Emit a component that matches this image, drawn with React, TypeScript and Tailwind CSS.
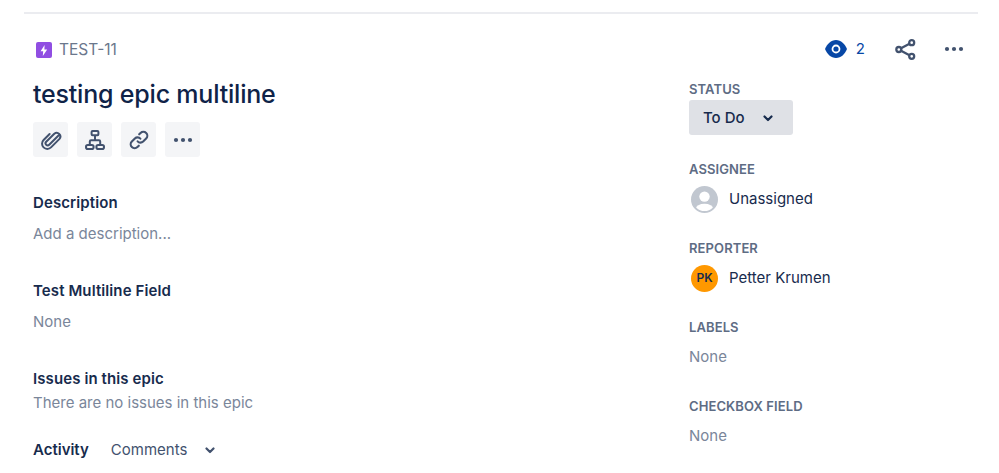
const font = { fontFamily: "Inter, sans-serif" };

function Dots() {
  return (
    <svg width="20" height="6" viewBox="0 0 20 6" fill="#42526e">
      <circle cx="3" cy="3" r="2.1" />
      <circle cx="10" cy="3" r="2.1" />
      <circle cx="17" cy="3" r="2.1" />
    </svg>
  );
}

function Chevron({ color = "#172b4d" }: { color?: string }) {
  return (
    <svg width="10" height="7" viewBox="0 0 10 7" fill="none" stroke={color} strokeWidth="2.2" strokeLinecap="round" strokeLinejoin="round">
      <path d="M1.5 1.5 5 5l3.5-3.5" />
    </svg>
  );
}

function ActionButton({ children }: { children: React.ReactNode }) {
  return <button className="flex h-[35px] w-[35px] items-center justify-center rounded-[3px] bg-[#f4f5f7]">{children}</button>;
}

function SideLabel({ children }: { children: React.ReactNode }) {
  return <div className="text-[13px] leading-[16px] font-semibold tracking-[0.1px] text-[#5e6c84]">{children}</div>;
}

export default function App() {
  return (
    <div className="h-[473px] w-[999px] overflow-hidden bg-white px-6 pt-3 text-[15px] text-[#172b4d]" style={font}>
      <div className="h-[2px] w-[954px] bg-[#ebecf0]" />
      <div className="flex pl-[9px]">
        {/* Colonne principale */}
        <main className="w-[656px]">
          <div className="mt-[26px] flex h-[20px] items-center gap-[7px] pl-[3px]">
            <span className="flex h-4 w-4 items-center justify-center rounded-[2px] bg-[#904ee2]">
              <svg width="8" height="11" viewBox="0 0 8 11" fill="white">
                <path d="M4.6 0 .6 6.2h2.6L2.8 11l4.4-6.6H4.4z" />
              </svg>
            </span>
            <span className="text-[15.5px] text-[#6b778c]">TEST-11</span>
          </div>
          <h1 className="mt-[16px] text-[25px] leading-[36px] font-medium tracking-[-0.2px] text-[#0f2348]">testing epic multiline</h1>
          <div className="mt-[10px] flex gap-[9px]">
            <ActionButton>
              <svg width="22" height="22" viewBox="0 0 22 22" fill="none" stroke="#42526e" strokeWidth="2" strokeLinecap="round" strokeLinejoin="round">
                <path d="M18.5 6.5 9.2 15.8a2.1 2.1 0 0 1-3-3l8.1-8.1a3.7 3.7 0 0 1 5.2 5.2L11 18.4a5.2 5.2 0 0 1-7.4-7.4l6-6" />
              </svg>
            </ActionButton>
            <ActionButton>
              <svg width="20" height="20" viewBox="0 0 20 20" fill="none" stroke="#42526e" strokeWidth="2" strokeLinejoin="round">
                <rect x="6.6" y="1" width="6.8" height="4.2" rx="1" />
                <rect x="1" y="15" width="7.6" height="4" rx="1.8" />
                <rect x="11.4" y="15" width="7.6" height="4" rx="1.8" />
                <path d="M10 5.2v5M4.8 15v-3.6c0-.7.5-1.2 1.2-1.2h8c.7 0 1.2.5 1.2 1.2V15" />
              </svg>
            </ActionButton>
            <ActionButton>
              <svg width="22" height="22" viewBox="0 0 24 24" fill="none" stroke="#42526e" strokeWidth="2.3" strokeLinecap="round" strokeLinejoin="round">
                <path d="M10.5 13.5a4.2 4.2 0 0 0 6 .2l3.3-3.3a4.3 4.3 0 0 0-6.1-6.1l-1.5 1.5" />
                <path d="M13.5 10.5a4.2 4.2 0 0 0-6-.2l-3.3 3.3a4.3 4.3 0 0 0 6.1 6.1l1.5-1.5" />
              </svg>
            </ActionButton>
            <ActionButton>
              <Dots />
            </ActionButton>
          </div>

          <section className="mt-[35px]">
            <h2 className="leading-[22px] font-semibold tracking-[0.1px]">Description</h2>
            <p className="mt-[9px] leading-[22px] text-[#7a869a]">Add a description...</p>
          </section>
          <section className="mt-[35px]">
            <h2 className="leading-[22px] font-semibold tracking-[0.1px]">Test Multiline Field</h2>
            <p className="mt-[9px] leading-[22px] text-[#7a869a]">None</p>
          </section>
          <section className="mt-[35px]">
            <h2 className="leading-[22px] font-semibold tracking-[0.1px]">Issues in this epic</h2>
            <p className="mt-[2px] leading-[22px] text-[#7a869a]">There are no issues in this epic</p>
          </section>
          <div className="mt-[25px] flex items-center">
            <span className="leading-[22px] font-semibold">Activity</span>
            <span className="ml-[22px] leading-[22px] text-[#42526e]">Comments</span>
            <span className="ml-[18px] flex">
              <Chevron color="#42526e" />
            </span>
          </div>
        </main>

        {/* Colonne latérale */}
        <aside className="w-[280px]">
          <div className="mt-[23px] flex h-[24px] items-center justify-end pr-[5px]">
            <svg width="22" height="18" viewBox="0 0 22 18">
              <path fill="#0747a6" d="M11 0C16 0 20 4 22 9c-2 5-6 9-11 9S2 14 0 9C2 4 6 0 11 0z" />
              <circle cx="11" cy="9" r="4.4" fill="white" />
              <circle cx="11" cy="9" r="2.6" fill="#0747a6" />
            </svg>
            <span className="ml-[9px] text-[#0747a6]">2</span>
            <svg className="ml-[30px]" width="21" height="21" viewBox="0 0 22 22" fill="none" stroke="#42526e" strokeWidth="2.4">
              <circle cx="17.5" cy="3.8" r="2.6" />
              <circle cx="4" cy="11" r="2.6" />
              <circle cx="17.5" cy="18.2" r="2.6" />
              <path d="M6.3 9.8 15.2 5M6.3 12.2l8.9 4.8" />
            </svg>
            <span className="ml-[28px] flex">
              <Dots />
            </span>
          </div>

          <div className="mt-[20px]">
            <SideLabel>STATUS</SideLabel>
            <button className="mt-[3px] flex h-[35px] w-[104px] items-center rounded-[3px] bg-[#dfe1e6] pl-[14px] pt-[2px] font-medium">
              To Do
              <span className="ml-[18px] flex">
                <Chevron />
              </span>
            </button>
          </div>

          <div className="mt-[26px]">
            <SideLabel>ASSIGNEE</SideLabel>
            <div className="mt-[8px] flex items-center gap-[11px] pl-[2px]">
              <svg width="27" height="27" viewBox="0 0 28 28">
                <circle cx="14" cy="14" r="14" fill="#c1c7d0" />
                <clipPath id="unassigned-clip">
                  <circle cx="14" cy="14" r="12" />
                </clipPath>
                <circle cx="14" cy="11" r="5.4" fill="white" />
                <ellipse cx="14" cy="23.5" rx="9" ry="5" fill="white" clipPath="url(#unassigned-clip)" />
              </svg>
              <span className="leading-[28px]">Unassigned</span>
            </div>
          </div>

          <div className="mt-[27px]">
            <SideLabel>REPORTER</SideLabel>
            <div className="mt-[8px] flex items-center gap-[11px] pl-[2px]">
              <span className="flex h-[27px] w-[27px] items-center justify-center rounded-full bg-[#ff9800] text-[12px] font-semibold text-[#172b4d]">PK</span>
              <span className="leading-[28px]">Petter Krumen</span>
            </div>
          </div>

          <div className="mt-[27px]">
            <SideLabel>LABELS</SideLabel>
            <p className="mt-[11px] leading-[22px] text-[#7a869a]">None</p>
          </div>

          <div className="mt-[30px]">
            <SideLabel>CHECKBOX FIELD</SideLabel>
            <p className="mt-[11px] leading-[22px] text-[#7a869a]">None</p>
          </div>
        </aside>
      </div>
    </div>
  );
}
